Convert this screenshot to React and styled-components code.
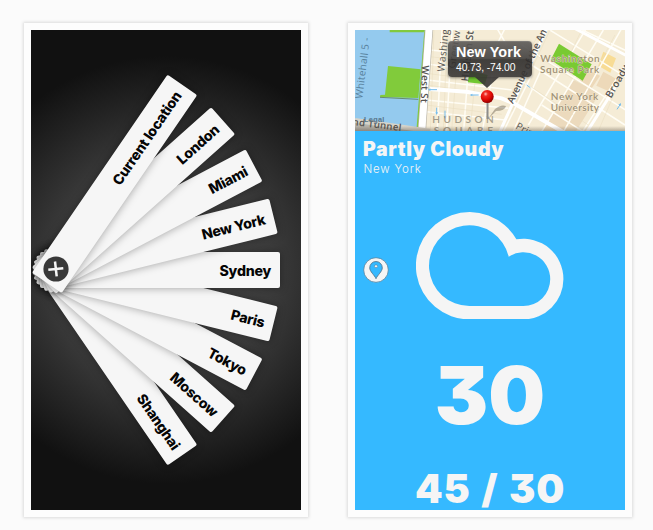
import React from "react";
import styled, { createGlobalStyle } from "styled-components";

const GlobalStyle = createGlobalStyle`
  * { box-sizing: border-box; }
  body { margin: 0; background: #fbfbfb; font-family: "Inter", sans-serif; overflow: hidden; }
`;

const Page = styled.main`
  display: flex;
  gap: 40px;
  height: 530px;
  padding: 23px 0 0 24px;
`;

const Frame = styled.section`
  flex: none;
  width: 284px;
  height: 494px;
  padding: 7px;
  background: #fdfdfd;
  box-shadow: 0 0 3px 1px rgba(0, 0, 0, 0.13);
`;

const FanScreen = styled.div`
  position: relative;
  width: 270px;
  height: 480px;
  overflow: hidden;
  background: radial-gradient(circle 214px at 50% 50%, #505050 0%, #3c3c3c 50%, #111 100%);
`;

const Card = styled.div`
  position: absolute;
  left: 9px;
  top: 222px;
  width: 240px;
  height: 36px;
  padding-right: 9px;
  display: flex;
  align-items: center;
  justify-content: flex-end;
  border-radius: 2px;
  background: #f6f6f6;
  box-shadow: 0 0 8px rgba(0, 0, 0, 0.36);
  transform-origin: 15.6px 18px;
  transform: rotate(${(p) => p.$angle}deg);
  z-index: ${(p) => p.$layer};
  color: #050505;
  font-size: 14.2px;
  font-weight: 800;
  letter-spacing: -0.25px;
  white-space: nowrap;
`;

const FanButton = styled.svg`
  position: absolute;
  left: 12px;
  top: 226px;
  width: 26px;
  height: 26px;
  z-index: 20;
`;

const WeatherScreen = styled.div`
  position: relative;
  display: flex;
  flex-direction: column;
  width: 270px;
  height: 480px;
  overflow: hidden;
  background: #35b9ff;
  color: #f5f5f5;
`;

const MapArea = styled.div`
  position: relative;
  flex: none;
  height: 101px;

  &::after {
    content: "";
    position: absolute;
    inset: auto 0 0;
    height: 5px;
    background: linear-gradient(rgba(60, 50, 40, 0), rgba(60, 50, 40, 0.35));
  }
`;

const MapSvg = styled.svg`
  display: block;
  width: 270px;
  height: 101px;
  font-family: "Open Sans", "Noto Sans", sans-serif;
`;

const Callout = styled.div`
  position: absolute;
  left: 93px;
  top: 11px;
  width: 84px;
  height: 36px;
  padding: 2px 0 0 8px;
  border-radius: 4px;
  background: linear-gradient(rgba(92, 90, 88, 0.9), rgba(66, 64, 63, 0.9) 48%, rgba(46, 44, 43, 0.9) 52%, rgba(56, 54, 53, 0.9));
  box-shadow: 0 1px 3px rgba(0, 0, 0, 0.45), inset 0 1px 0 rgba(255, 255, 255, 0.12);
  color: #fff;
  font-family: "Liberation Sans", sans-serif;
  white-space: nowrap;

  &::after {
    content: "";
    position: absolute;
    left: 27px;
    top: 36px;
    border: 12px solid transparent;
    border-top: 11px solid rgba(56, 54, 53, 0.9);
    border-bottom: 0;
  }
`;

const CalloutTitle = styled.div`
  font-size: 14.4px;
  font-weight: 700;
  line-height: 18px;
  letter-spacing: 0.1px;
`;

const CalloutText = styled.div`
  font-size: 10.4px;
  line-height: 14px;
  letter-spacing: -0.15px;
`;

const MapPin = styled.svg`
  position: absolute;
  left: 124px;
  top: 58px;
  width: 30px;
  height: 33px;
`;

const Title = styled.h1`
  margin: 6px 0 0 8px;
  font-size: 19.5px;
  line-height: 24px;
  font-weight: 900;
  letter-spacing: 0.6px;
  white-space: nowrap;
`;

const Place = styled.div`
  margin: 0 0 0 8.5px;
  font-size: 11.5px;
  line-height: 16px;
  font-weight: 300;
  letter-spacing: 0.8px;
`;

const Cloud = styled.svg`
  flex: none;
  align-self: center;
  width: 147.4px;
  height: 107.4px;
  margin-top: 35px;
`;

const PinButton = styled.svg`
  position: absolute;
  left: 8px;
  top: 227px;
  width: 26px;
  height: 26px;
`;

const Reading = styled.div`
  align-self: center;
  margin-top: ${(p) => p.$top}px;
  font-size: ${(p) => p.$size}px;
  line-height: 1;
  font-weight: 900;
  letter-spacing: ${(p) => p.$spacing}px;
  word-spacing: ${(p) => p.$words}px;
  font-feature-settings: "cv09" 1, "calt" 0;
  white-space: nowrap;
`;

const cities = [
  "Current location",
  "London",
  "Miami",
  "New York",
  "Sydney",
  "Paris",
  "Tokyo",
  "Moscow",
  "Shanghai",
];

function StreetMap() {
  return (
    <MapSvg viewBox="0 15 810 303">
      <rect y="15" width="810" height="303" fill="#f5ecd6" />
      <path d="M655 165 734 205 662 320 560 320 590 270Z" fill="#ecdabd" />
      <path d="M690 130 735 152 710 190 675 170ZM745 140 790 165 768 202 724 182Z" fill="#edd9b9" />
      <path d="M745 80 783 100 766 143 730 122Z" fill="#f8dc95" />
      <g stroke="#fffdf5" strokeWidth="4.5" fill="none">
        <path d="M262 0 246 330M292 0 274 330M350 0 325 330M412 150 380 330M310 0 304 60" />
        <path d="M225 75 290 82M218 165 470 195M215 260 450 285M222 118 300 128M215 225 460 250" />
        <path d="M420 0 455 60M455 0 425 60M530 150 440 330M560 130 470 330" />
        <path d="M500 60 820 260M530 120 810 300M560 0 820 160M650 0 820 80" />
        <path d="M700 0 520 300M745 15 560 320M800 10 620 330M830 90 670 340" />
        <path d="M490 160 600 240M560 240 700 330" />
      </g>
      <g stroke="#e8dcbf" strokeWidth="1.5" fill="none">
        <path d="M237 15 226 318M277 15 265 318M303 150 290 318M360 170 345 318M400 240 395 318M495 60 730 210M520 180 700 300M550 30 480 150M585 15 470 260M680 15 630 120M780 30 700 180M810 130 730 318" />
        <path d="M222 95 280 101M215 145 330 160M213 240 440 268M214 180 340 197" />
      </g>
      <path d="M612 56 710 118 683 167 587 105Z" fill="#79ca32" />
      <path d="M345 138 398 150 390 178 338 172Z" fill="#72c832" />

      <path d="M0 15H212L186 318H0Z" fill="#94caee" />
      <path d="M104 15H208L206 22H104Z" fill="#82c93e" />
      <path d="M99 123 197 133 190 219 75 216 76 210 90 209Z" fill="#81cb3b" />
      <path d="M75 217 190 223" stroke="#668b70" strokeWidth="3" />
      <path d="M212 15 188 318" stroke="#82c93e" strokeWidth="8" />
      <path d="M223 0 200 325" stroke="#b9b4a6" strokeWidth="25" />
      <path d="M223 0 200 325" stroke="#fff" strokeWidth="21" />
      <path d="M0 293 190 318H0Z" fill="#b7b3aa" />
      <path d="M0 286 225 318" stroke="#d7d3c9" strokeWidth="14" />
      <path d="M225 192 335 200 440 220 480 237 640 330" fill="none" stroke="#fff" strokeWidth="12" />
      <path d="M580 0 430 330M640 0 820 95M785 180 690 330" fill="none" stroke="#fff" strokeWidth="9" />
      <g stroke="#74bcec" strokeWidth="3" fill="#74bcec">
        <path d="M224 194H246M350 210H371M245 266V248M270 278V257M786 253 796 238M515 180 526 188" />
        <path d="M219 194 226 190V198ZM344 210 352 206V214ZM245 270 241 262H249ZM270 282 266 274H274ZM798 234 797 243 790 239Z" stroke="none" />
      </g>
      <g fill="#555350" fontSize="30">
        <text transform="translate(22 222) rotate(-83)" fill="#58819c" textLength="184">Whitehall 5 -</text>
        <text transform="translate(201 121) rotate(92)" textLength="112" fontWeight="600">West St</text>
        <text transform="translate(268 141) rotate(-84)" textLength="128">Washing</text>
        <text transform="translate(300 131) rotate(-82)" textLength="114">Greenw</text>
        <text transform="translate(340 170) rotate(-84)" textLength="153" fontWeight="600">Hudson St</text>
        <text transform="translate(474 238) rotate(-65)" textLength="252" fontWeight="600">Avenue of the Am</text>
        <text transform="translate(768 221) rotate(-60)" textLength="118" fontWeight="600">Broadw</text>
        <text transform="translate(480 310) rotate(28)">Prince</text>
        <text transform="translate(-8 300) rotate(7)" fontSize="29" fontWeight="600" textLength="147">nd Tunnel</text>
      </g>
      <g fill="#9e9075" fontSize="30" stroke="#faf3df" strokeWidth="2" paintOrder="stroke" fontWeight="600" fontFamily="Lato">
        <text x="556" y="112" textLength="178">Washington</text>
        <text x="555" y="143" textLength="178">Square Park</text>
        <text x="587" y="226" textLength="143">New York</text>
        <text x="587" y="257" textLength="145">University</text>
      </g>
      <g fill="#a39b89" fontSize="30" fontFamily="Lato" fontWeight="600">
        <text x="232" y="294" textLength="184">HUDSON</text>
        <text x="236" y="326" textLength="178">SQUARE</text>
      </g>
      <text x="27" y="291" fontFamily="Liberation Sans" fontSize="22" fontWeight="700" fill="#58758a" textLength="61">Legal</text>
    </MapSvg>
  );
}

export default function App() {
  return (
    <>
      <GlobalStyle />
      <Page>
        <Frame>
          <FanScreen>
            {cities.map((name, i) => (
              <Card key={name} $angle={(i - 4) * 13.9} $layer={9 - i}>
                {name}
              </Card>
            ))}
            <FanButton viewBox="0 0 26 26">
              <circle cx="13" cy="13" r="12.6" fill="#383838" />
              <path d="M12 5.5 13.7 20.4M5.3 13.8 20.3 12.2" stroke="#f6f6f6" strokeWidth="2.5" />
            </FanButton>
          </FanScreen>
        </Frame>
        <Frame>
          <WeatherScreen>
            <MapArea>
              <StreetMap />
              <Callout>
                <CalloutTitle>New York</CalloutTitle>
                <CalloutText>40.73, -74.00</CalloutText>
              </Callout>
              <MapPin viewBox="0 0 30 33">
                <defs>
                  <radialGradient id="pin" cx="38%" cy="30%" r="68%">
                    <stop offset="0" stopColor="#ffc0b8" />
                    <stop offset=".25" stopColor="#f02a22" />
                    <stop offset=".65" stopColor="#df0904" />
                    <stop offset="1" stopColor="#940000" />
                  </radialGradient>
                </defs>
                <path d="M9 31 16 21Q22 16 27 18Q26 23 17 23Z" fill="#554c3a" opacity=".4" />
                <path d="M8.5 13V31" stroke="#8c8c8c" strokeWidth="2" />
                <circle cx="8.2" cy="8.6" r="6.5" fill="url(#pin)" />
              </MapPin>
            </MapArea>
            <Title>Partly Cloudy</Title>
            <Place>New York</Place>
            <Cloud viewBox="215 246 442 322">
              <path
                fill="#f5f5f5"
                fillRule="evenodd"
                d="M376 568A161 161 0 1 1 516 328A120.2 120.2 0 0 1 657 447.5A120.2 120.5 0 0 1 537 568ZM376 528A121 121 0 1 1 493 380A80.5 80.5 0 0 1 617.5 447.5A80.5 80.5 0 0 1 537 528Z"
              />
            </Cloud>
            <Reading $top={36} $size={80} $spacing={0} $words={0}>30</Reading>
            <Reading $top={35} $size={39.5} $spacing={0.8} $words={2}>45 / 30</Reading>
            <PinButton viewBox="0 0 26 26">
              <circle cx="13" cy="13" r="12.3" fill="#f5f5f5" stroke="#4b7794" strokeWidth=".7" />
              <path
                d="M13 21.7C11.5 18 6.7 14.6 6.7 10.8A6.3 6.3 0 0 1 19.3 10.8C19.3 14.6 14.5 18 13 21.7Z"
                fill="#35b9ff"
                stroke="#4b6f87"
                strokeWidth=".8"
              />
              <circle cx="13" cy="9.2" r="1.5" fill="#f5f5f5" stroke="#4b6f87" strokeWidth=".5" />
            </PinButton>
          </WeatherScreen>
        </Frame>
      </Page>
    </>
  );
}
